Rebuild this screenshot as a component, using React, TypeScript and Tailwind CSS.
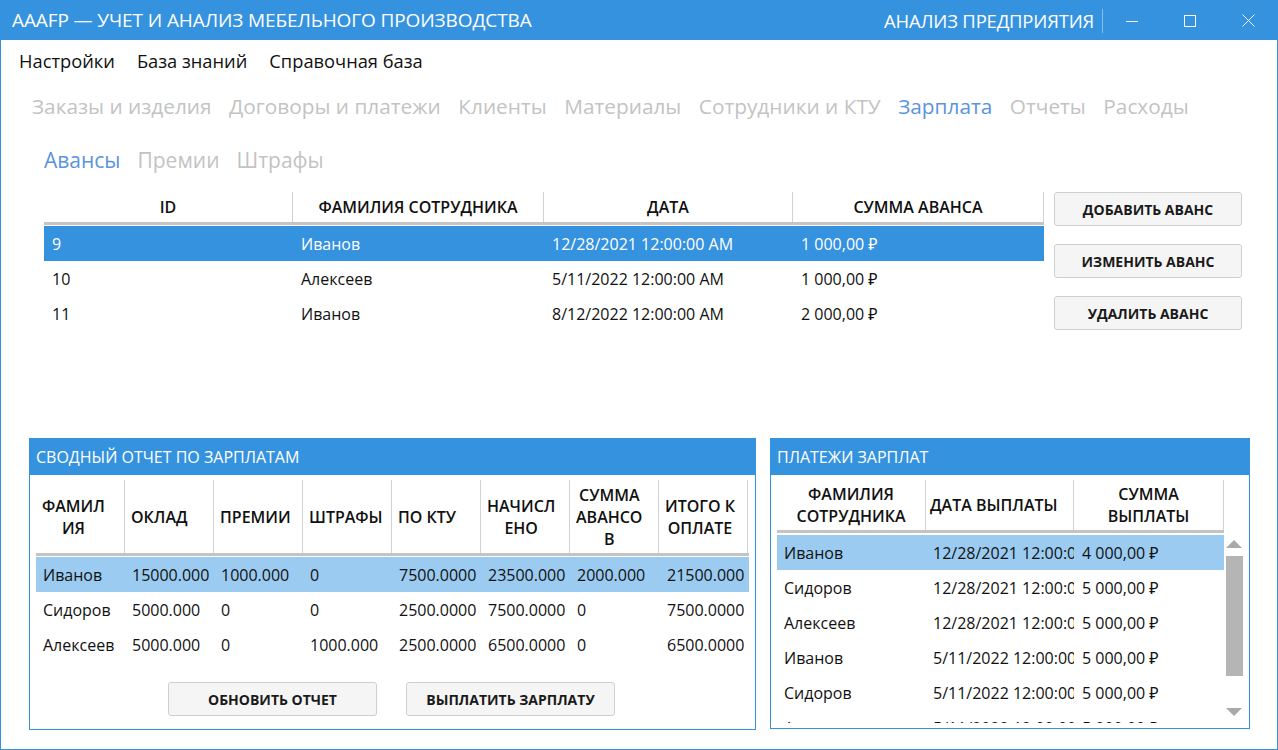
import React from "react";

const advances = [
  { id: "9", name: "Иванов", date: "12/28/2021 12:00:00 AM", sum: "1 000,00 ₽" },
  { id: "10", name: "Алексеев", date: "5/11/2022 12:00:00 AM", sum: "1 000,00 ₽" },
  { id: "11", name: "Иванов", date: "8/12/2022 12:00:00 AM", sum: "2 000,00 ₽" },
];

const summaryCols = [
  ["ФАМИЛ", "ИЯ"],
  ["ОКЛАД"],
  ["ПРЕМИИ"],
  ["ШТРАФЫ"],
  ["ПО КТУ"],
  ["НАЧИСЛ", "ЕНО"],
  ["СУММА", "АВАНСО", "В"],
  ["ИТОГО К", "ОПЛАТЕ"],
];

const summaryRows = [
  ["Иванов", "15000.000", "1000.000", "0", "7500.0000", "23500.000", "2000.000", "21500.000"],
  ["Сидоров", "5000.000", "0", "0", "2500.0000", "7500.0000", "0", "7500.0000"],
  ["Алексеев", "5000.000", "0", "1000.000", "2500.0000", "6500.0000", "0", "6500.0000"],
];

const payments = [
  ["Иванов", "12/28/2021 12:00:00 AM", "4 000,00 ₽"],
  ["Сидоров", "12/28/2021 12:00:00 AM", "5 000,00 ₽"],
  ["Алексеев", "12/28/2021 12:00:00 AM", "5 000,00 ₽"],
  ["Иванов", "5/11/2022 12:00:00 AM", "5 000,00 ₽"],
  ["Сидоров", "5/11/2022 12:00:00 AM", "5 000,00 ₽"],
  ["Алексеев", "5/11/2022 12:00:00 AM", "5 000,00 ₽"],
];

const tabs = ["Заказы и изделия", "Договоры и платежи", "Клиенты", "Материалы", "Сотрудники и КТУ", "Зарплата", "Отчеты", "Расходы"];

function Btn({ label, className = "" }: { label: string; className?: string }) {
  return (
    <button
      className={`flex items-center justify-center rounded-[3px] border border-[#cfcfcf] bg-[#f5f5f5] text-[14px] font-bold text-[#1a1a1a] ${className}`}
    >
      {label}
    </button>
  );
}

function PanelHeader({ title }: { title: string }) {
  return (
    <div className="flex h-[36px] shrink-0 items-center bg-[#3592de] px-[6px] text-[16px] text-white">
      {title}
    </div>
  );
}

export default function App() {
  return (
    <div
      className="flex h-[750px] w-[1278px] flex-col overflow-hidden border border-[#3592de] bg-white text-[#111]"
      style={{ fontFamily: '"Open Sans", "Noto Sans", sans-serif' }}
    >
      {/* Title bar */}
      <div className="flex h-[39px] shrink-0 items-center bg-[#3592de] text-white">
        <div className="pl-[11px] text-[19px] tracking-[-0.1px]">AAAFP — УЧЕТ И АНАЛИЗ МЕБЕЛЬНОГО ПРОИЗВОДСТВА</div>
        <div className="ml-auto text-[18.5px] tracking-[-0.2px]">АНАЛИЗ ПРЕДПРИЯТИЯ</div>
        <div className="ml-[8px] h-[24px] w-px bg-white/40" />
        <div className="flex h-full">
          <div className="flex w-[58px] items-center justify-center">
            <svg width="12" height="12" viewBox="0 0 12 12">
              <path d="M0 6.5h12" stroke="white" strokeWidth="1" />
            </svg>
          </div>
          <div className="flex w-[58px] items-center justify-center">
            <svg width="12" height="12" viewBox="0 0 12 12">
              <rect x="0.5" y="0.5" width="11" height="11" fill="none" stroke="white" strokeWidth="1" />
            </svg>
          </div>
          <div className="flex w-[58px] items-center justify-center">
            <svg width="13" height="13" viewBox="0 0 13 13">
              <path d="M0.5 0.5L12.5 12.5M12.5 0.5L0.5 12.5" stroke="white" strokeWidth="1" />
            </svg>
          </div>
        </div>
      </div>

      {/* Menu */}
      <div className="flex h-[41px] shrink-0 items-center gap-[22px] pl-[18px] text-[18.3px]">
        <span>Настройки</span>
        <span>База знаний</span>
        <span>Справочная база</span>
      </div>

      {/* Main tabs */}
      <div className="flex h-[52px] shrink-0 items-center gap-[17.5px] pl-[31px] text-[20.8px] text-[#c3c3c3]">
        {tabs.map((t) => (
          <span key={t} className={t === "Зарплата" ? "text-[#5a94dc]" : ""}>
            {t}
          </span>
        ))}
      </div>

      {/* Sub tabs */}
      <div className="flex h-[56px] shrink-0 items-center gap-[17px] pl-[43px] text-[21px] text-[#c3c3c3]">
        <span className="text-[#5a94dc]">Авансы</span>
        <span>Премии</span>
        <span>Штрафы</span>
      </div>

      {/* Advances grid + buttons */}
      <div className="flex h-[249px] shrink-0 pt-[3px]">
        <div className="ml-[43px] w-[1000px]">
          <div className="grid h-[33px] grid-cols-[249px_251px_249px_251px] border-b-[3px] border-[#c4c4c4] text-[16px] font-semibold">
            {["ID", "ФАМИЛИЯ СОТРУДНИКА", "ДАТА", "СУММА АВАНСА"].map((h) => (
              <div key={h} className="flex items-center justify-center border-r border-[#d2d2d2]">
                {h}
              </div>
            ))}
          </div>
          <div className="pt-px">
            {advances.map((r, i) => (
              <div
                key={r.id}
                className={`grid h-[35px] grid-cols-[249px_251px_249px_251px] items-center text-[16px] ${
                  i === 0 ? "bg-[#3592de] text-white" : ""
                }`}
              >
                <div className="pl-[8px]">{r.id}</div>
                <div className="pl-[8px]">{r.name}</div>
                <div className="pl-[8px]">{r.date}</div>
                <div className="pl-[8px]">{r.sum}</div>
              </div>
            ))}
          </div>
        </div>
        <div className="ml-[10px] flex w-[188px] flex-col gap-[18px]">
          <Btn label="ДОБАВИТЬ АВАНС" className="h-[34px]" />
          <Btn label="ИЗМЕНИТЬ АВАНС" className="h-[34px]" />
          <Btn label="УДАЛИТЬ АВАНС" className="h-[34px]" />
        </div>
      </div>

      {/* Bottom panels */}
      <div className="flex shrink-0">
        {/* Summary report */}
        <div className="ml-[28px] flex h-[292px] w-[727px] flex-col border border-[#3592de]">
          <PanelHeader title="СВОДНЫЙ ОТЧЕТ ПО ЗАРПЛАТАМ" />
          <div className="px-[6px] pt-[5px]">
            <div className="grid h-[76px] grid-cols-[89px_89px_89px_89px_89px_89px_89px_89px] border-b-[3px] border-[#c4c4c4] text-[16px] font-semibold leading-[22px]">
              {summaryCols.map((lines, i) => (
                <div key={i} className="flex items-center border-r border-[#d2d2d2] px-[6px]">
                  <div className="whitespace-nowrap text-center">
                    {lines.map((l) => (
                      <div key={l}>{l}</div>
                    ))}
                  </div>
                </div>
              ))}
            </div>
            <div className="pt-px">
              {summaryRows.map((r, i) => (
                <div
                  key={i}
                  className={`grid h-[35px] grid-cols-[89px_89px_89px_89px_89px_89px_89px_89px] items-center text-[16px] ${
                    i === 0 ? "bg-[#9bcbf0]" : ""
                  }`}
                >
                  {r.map((c, j) => (
                    <div key={j} className={`overflow-hidden whitespace-nowrap ${j === 7 ? "pl-[8px]" : "pl-[7px]"}`}>
                      {c}
                    </div>
                  ))}
                </div>
              ))}
            </div>
            <div className="mt-[20px] flex gap-[29px] pl-[132px]">
              <Btn label="ОБНОВИТЬ ОТЧЕТ" className="h-[34px] w-[209px]" />
              <Btn label="ВЫПЛАТИТЬ ЗАРПЛАТУ" className="h-[34px] w-[209px]" />
            </div>
          </div>
        </div>

        {/* Salary payments */}
        <div className="ml-[14px] flex h-[291px] w-[480px] flex-col border border-[#3592de]">
          <PanelHeader title="ПЛАТЕЖИ ЗАРПЛАТ" />
          <div className="flex min-h-0 flex-1 pl-[6px] pt-[5px]">
            <div className="flex w-[447px] flex-col">
              <div className="grid h-[53px] shrink-0 grid-cols-[149px_148px_150px] border-b-[3px] border-[#c4c4c4] text-[16px] font-semibold leading-[22px]">
                <div className="flex items-center justify-center border-r border-[#d2d2d2] text-center">
                  <div>
                    <div>ФАМИЛИЯ</div>
                    <div>СОТРУДНИКА</div>
                  </div>
                </div>
                <div className="flex items-center border-r border-[#d2d2d2] pl-[4px]">ДАТА ВЫПЛАТЫ</div>
                <div className="flex items-center justify-center border-r border-[#d2d2d2] text-center">
                  <div>
                    <div>СУММА</div>
                    <div>ВЫПЛАТЫ</div>
                  </div>
                </div>
              </div>
              <div className="mb-[5px] min-h-0 flex-1 overflow-hidden pt-[2px]">
                {payments.map((r, i) => (
                  <div
                    key={i}
                    className={`grid h-[35px] grid-cols-[149px_148px_150px] items-center text-[16px] ${
                      i === 0 ? "bg-[#9bcbf0]" : ""
                    }`}
                  >
                    <div className="pl-[7px]">{r[0]}</div>
                    <div className="overflow-hidden whitespace-nowrap pl-[7px] pr-[2px]">{r[1]}</div>
                    <div className="pl-[8px]">{r[2]}</div>
                  </div>
                ))}
              </div>
            </div>
            <div className="ml-[1px] flex w-[18px] flex-col items-center pt-[60px] pb-[12px]">
              <svg width="16" height="8" viewBox="0 0 16 8">
                <path d="M8 0L16 8H0Z" fill="#a9a9a9" />
              </svg>
              <div className="mt-[8px] h-[120px] w-[17px] bg-[#b5b5b5]" />
              <div className="flex-1" />
              <svg width="16" height="8" viewBox="0 0 16 8">
                <path d="M0 0H16L8 8Z" fill="#a9a9a9" />
              </svg>
            </div>
          </div>
        </div>
      </div>
    </div>
  );
}
